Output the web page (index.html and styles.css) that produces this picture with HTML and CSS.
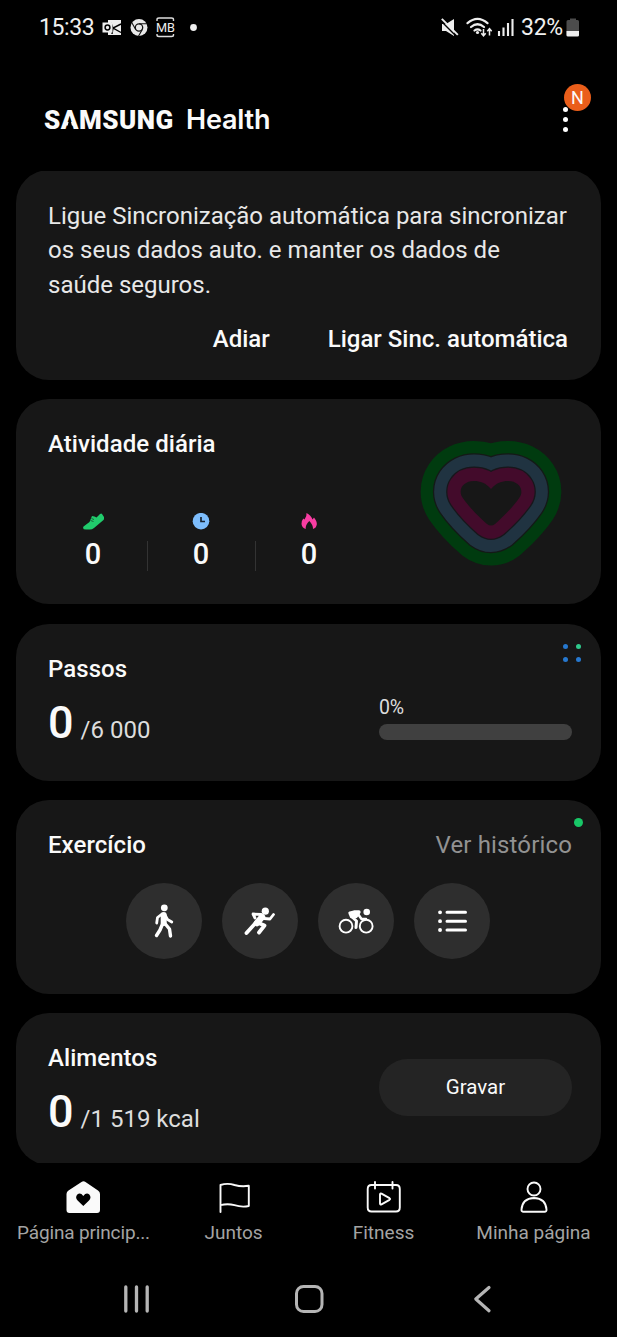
FILE: index.html
```html
<!DOCTYPE html>
<html lang="pt">
<head>
<meta charset="utf-8">
<title>Samsung Health</title>
<link rel="stylesheet" href="styles.css">
</head>
<body>
<div class="screen">
  <div class="status">
    <div class="status-left">
      <span class="clock">15:33</span>
      <svg class="s-icons" width="100" height="26" viewBox="100 14 100 26">
        <path fill="#eee" d="M108 20h13v15h-13z"/>
        <path fill="none" stroke="#000" stroke-width="1.400" d="M121 24l-8 4 8 4.500M113 28l-2-5M113 28l-1 6"/>
        <rect x="102.500" y="22.500" width="10" height="10" fill="#eee"/>
        <circle cx="107.500" cy="27.500" r="2.400" fill="none" stroke="#000" stroke-width="1.500"/>
        <circle cx="139" cy="27.500" r="8.500" fill="#e8e8e8"/>
        <circle cx="139" cy="27.500" r="3.700" fill="#e8e8e8" stroke="#111" stroke-width="1.300"/>
        <path d="M139 23.700h8M135.700 29.500l-4-7M142.300 29.500l-4 7" stroke="#111" stroke-width="1.100"/>
        <path d="M157 21v-1.500q0-1.500 2-1.500h12.500q2 0 2 1.500V21M157 34v1q0 1.500 2 1.500h12.500q2 0 2-1.500v-1" fill="none" stroke="#ddd" stroke-width="1.400"/>
        <text x="156" y="32" class="mb" textLength="19" lengthAdjust="spacingAndGlyphs">MB</text>
        <circle cx="193.500" cy="27.500" r="3.400" fill="#eee"/>
      </svg>
    </div>
    <div class="status-right">
      <svg width="76" height="26" viewBox="440 14 76 26">
        <path fill="#eee" d="M442 24h4l8-5v17l-8-5h-4z"/>
        <path d="M440.500 20.500l16 16" stroke="#000" stroke-width="1.500"/>
        <path d="M441.800 18.800l16 16" stroke="#eee" stroke-width="1.900"/>
        <g fill="none" stroke="#eee" stroke-width="2.200" stroke-linecap="round">
          <path d="M467.500 23.200q10-8.500 20 0M471 27q6.500-5.500 13 0M474.500 30.500q3-2.300 6 0"/>
        </g>
        <circle cx="477.500" cy="32.500" r="1.600" fill="#eee"/>
        <path d="M483.500 29v6.500M481.300 33.300l2.200 2.500 2.200-2.500M489.500 35.500V29M487.300 31.200l2.200-2.500 2.200 2.500" fill="none" stroke="#eee" stroke-width="1.500"/>
        <path d="M499 31v5M503.500 27.500v8.500M508 23v13M512.500 19v17" stroke="#eee" stroke-width="2.100"/>
      </svg>
      <span class="percent">32%</span>
      <svg width="14" height="20" viewBox="566 17 14 20">
        <path fill="#4c4c4c" d="M570 18.500h6V20h1.500q1.500 0 1.500 1.500V36h-12.500V21.500q0-1.500 1.500-1.500h2z"/>
        <path fill="#eee" d="M566.500 31H579v4q0 1.500-1.500 1.500H568q-1.500 0-1.500-1.500z"/>
      </svg>
    </div>
  </div>

  <header class="header">
    <div class="brand"><span class="samsung">S<span class="open-a">A</span>MSUNG</span><span class="health">Health</span></div>
    <div class="more">
      <i></i><i></i><i></i>
      <span class="badge">N</span>
    </div>
  </header>

  <main class="feed">
    <section class="card sync">
      <p class="sync-text">Ligue Sincronização automática para sincronizar<br>os seus dados auto. e manter os dados de<br>saúde seguros.</p>
      <div class="sync-actions"><span class="later">Adiar</span><span class="enable">Ligar Sinc. automática</span></div>
    </section>

    <section class="card activity">
      <div class="activity-info">
        <h2>Atividade diária</h2>
        <div class="stats">
          <div class="stat">
            <svg width="22" height="18" viewBox="82 513 22 18"><path fill="#20cb6c" d="M83.500 526.500l6-4.500 2.500-6 2.500.500 2 1 3.500-3.500q1.500-.8 2 0l2.200 3.200q.5 1.500-.700 2.800l-9.500 8q-2 1.500-4 1.500h-4q-4 0-2.500-3z"/><path d="M90.500 520.500l3 1M91.500 518.500l2.500 1" stroke="#171717" stroke-width=".6"/></svg>
            <b>0</b>
          </div>
          <div class="stat">
            <svg width="22" height="18" viewBox="190 513 22 18"><circle cx="201" cy="521.200" r="8.300" fill="#7dbdfc"/><path d="M201 517v4.500h4" fill="none" stroke="#172432" stroke-width="1.700"/></svg>
            <b>0</b>
          </div>
          <div class="stat">
            <svg width="22" height="18" viewBox="298 513 22 18"><path fill="#f83da2" d="M306.500 513q4.500 2 6 6.500l1.500-2q3.200 4 2.800 7-.5 3.500-3.800 4.500.2-4-3.700-8-4.100 4-3.600 8-3.700-1-4.200-5-.3-3 1.800-5.500l1.200 1q2.500-3 2-6.500z"/></svg>
            <b>0</b>
          </div>
        </div>
      </div>
      <svg class="heart" width="152" height="136" viewBox="415 436 152 136">
        <defs><path id="heart" stroke-linejoin="round" d="M491 489C486 483 480 481 474 481C463 481 457.500 490 462.500 497.500C469 507 479 517 487 524Q491 527 495 524C503 517 513 507 519.500 497.500C524.500 490 519 481 508 481C502 481 496 483 491 489Z"/></defs>
        <use href="#heart" stroke="#003b0f" stroke-width="80"/>
        <use href="#heart" stroke="#141917" stroke-width="55.500"/>
        <use href="#heart" stroke="#203341" stroke-width="53"/>
        <use href="#heart" stroke="#17171b" stroke-width="29"/>
        <use href="#heart" stroke="#430b2b" stroke-width="26.500"/>
        <use href="#heart" fill="#171717"/>
      </svg>
    </section>

    <section class="card steps">
      <div>
        <h2>Passos</h2>
        <p class="amount"><b>0</b><span>/6 000</span></p>
      </div>
      <div class="progress"><span>0%</span><div class="bar"></div></div>
      <div class="dots"><i></i><i class="green"></i><i></i><i></i></div>
    </section>

    <section class="card exercise">
      <div class="exercise-head"><h2>Exercício</h2><span>Ver histórico</span></div>
      <div class="shortcuts">
        <div class="round"><svg width="76" height="76" viewBox="126 883 76 76"><g fill="none" stroke="#fff" stroke-linecap="round" stroke-linejoin="round"><circle cx="164.300" cy="907.800" r="3.400" fill="#fff" stroke="none"/><path d="M163.700 915v8" stroke-width="6"/><path d="M162 914l-4.500 3.500-.8 5.500M165 915l2.500 4.500 4.300 2.500" stroke-width="2.800"/><path d="M162.500 924l-2.500 6-3.500 5.500M164.500 923l5 6 1 7" stroke-width="3.400"/></g></svg></div>
        <div class="round"><svg width="76" height="76" viewBox="222 883 76 76"><g fill="none" stroke="#fff" stroke-linecap="round" stroke-linejoin="round"><circle cx="265.300" cy="911.200" r="3.600" fill="#fff" stroke="none"/><path d="M262 917l-5 6" stroke-width="6.500"/><path d="M261 914.500l-8-.5 2 4M264 918.500l6 .5 3.500-4.500" stroke-width="2.800"/><path d="M256.500 922l-10 11M258.500 923l6 2.500-5.500 7" stroke-width="3.800"/></g></svg></div>
        <div class="round"><svg width="76" height="76" viewBox="318 883 76 76"><g fill="none" stroke="#fff" stroke-linecap="round" stroke-linejoin="round"><circle cx="346" cy="926.200" r="6.400" stroke-width="1.900"/><circle cx="366.200" cy="926.200" r="6.400" stroke-width="1.900"/><circle cx="366.700" cy="912" r="3.300" fill="#fff" stroke="none"/><path d="M350 913l4-1h5l-3 4.500h-4.500z" fill="#fff" stroke-width="3.300"/><path d="M351.500 916.500l5 4.500-.5 6.500" stroke-width="3"/><path d="M358 914l3.500 5h4.500" stroke-width="2.500"/></g></svg></div>
        <div class="round"><svg width="76" height="76" viewBox="414 883 76 76"><g stroke="#fff" stroke-linecap="round"><path d="M447 912.300h18.500M447 921.200h18.500M447 930h18.500" stroke-width="3"/><path d="M440 912.300h.1M440 921.200h.1M440 930h.1" stroke-width="3.800"/></g></svg></div>
      </div>
      <i class="new-dot"></i>
    </section>

    <section class="card food">
      <div>
        <h2>Alimentos</h2>
        <p class="amount"><b>0</b><span>/1 519 kcal</span></p>
      </div>
      <span class="record">Gravar</span>
    </section>
  </main>

  <nav class="tabs">
    <div class="tab home">
      <svg width="36" height="36" viewBox="65.500 1180 36 36"><path fill="#fafafa" d="M81 1182q2-1.300 4 0l12.500 8.500q2 1.300 2 3.500v16q0 3-3 3H69q-3 0-3-3v-16q0-2.200 2-3.500z"/><path fill="#000" d="M82.800 1196q3-4 6-1.500 2.500 3-.3 6l-5.700 5.500-5.700-5.500q-2.800-3-.3-6 3-2.500 6 1.500z"/></svg>
      <span>Página princip...</span>
    </div>
    <div class="tab flag">
      <svg width="36" height="36" viewBox="215.500 1180 36 36"><path fill="none" stroke="#fafafa" stroke-width="1.900" stroke-linejoin="round" stroke-linecap="round" d="M220 1212v-27q7-2.300 14 0 7 2 14.300.8V1206q-7 1.500-14.300-.8-7-2-14 0"/></svg>
      <span>Juntos</span>
    </div>
    <div class="tab fitness">
      <svg width="36" height="36" viewBox="365.500 1180 36 36"><g fill="none" stroke="#fafafa" stroke-width="1.900" stroke-linecap="round" stroke-linejoin="round"><path d="M371 1185h24.500q3.800 0 3.800 4v18.500q0 4-3.800 4H371q-3.800 0-3.800-4V1189q0-4 3.800-4zM374.500 1182v6.500M392 1182v6.500"/><path d="M379.500 1194.500v9q0 1.500 1.500.8l8-4.500q1.200-.8 0-1.600l-8-4.500q-1.500-.7-1.500.8z"/></g></svg>
      <span>Fitness</span>
    </div>
    <div class="tab me">
      <svg width="36" height="36" viewBox="515.500 1180 36 36"><g fill="none" stroke="#fafafa" stroke-width="1.900"><circle cx="533.500" cy="1189" r="6.500"/><path d="M521 1209.500q.8-11 12.500-11.500 11.700.5 12.500 11.500.2 2.300-2 2.300h-21q-2.200 0-2-2.300z"/></g></svg>
      <span>Minha página</span>
    </div>
  </nav>

  <div class="system-nav">
    <svg width="34" height="34" viewBox="0 0 34 34"><path d="M6.800 5v24M17.500 5v24M28.200 5v24" stroke="#b5b5b5" stroke-width="3.300" stroke-linecap="round"/></svg>
    <svg width="34" height="34" viewBox="0 0 34 34"><rect x="4.500" y="4.500" width="25.500" height="25" rx="7" fill="none" stroke="#b5b5b5" stroke-width="3"/></svg>
    <svg width="34" height="34" viewBox="0 0 34 34"><path d="M24 5.500L10.800 17 24 28.800" fill="none" stroke="#b5b5b5" stroke-width="3.200" stroke-linecap="round" stroke-linejoin="round"/></svg>
  </div>
</div>
</body>
</html>
```

FILE: styles.css
```css
* { box-sizing: border-box; }
body { margin: 0; background: #000; color: #fafafa; font-family: Roboto, sans-serif; }
h2, p { margin: 0; }
svg { display: block; flex: none; }
.screen { width: 617px; height: 1337px; display: flex; flex-direction: column; overflow: hidden; background: #000; }

.status { height: 54px; flex: none; display: flex; justify-content: space-between; padding: 14px 37px 0 39px; }
.status-left, .status-right { display: flex; height: 26px; align-items: center; color: #f0f0f0; }
.clock { width: 61px; font-size: 23px; line-height: 26px; padding-top: 1px; letter-spacing: -.4px; }
.mb { font: 13.500px Roboto, sans-serif; fill: #eee; }
.percent { width: 50px; font-size: 23px; line-height: 26px; padding: 1px 0 0 5px; letter-spacing: -.3px; }

.header { height: 117px; flex: none; display: flex; justify-content: space-between; padding: 49px 46px 0 44px; }
.brand { display: flex; align-items: center; height: 34px; line-height: 32px; white-space: nowrap; }
.samsung { width: 142px; font-size: 26px; font-weight: 900; letter-spacing: .5px; }
.open-a { position: relative; }
.open-a::after { content: ""; position: absolute; left: 5.500px; bottom: 4px; width: 7px; height: 14px; background: #000; clip-path: polygon(50% 0, 100% 100%, 0 100%); }
.health { font: 600 27px/32px Inter, sans-serif; letter-spacing: -.2px; }
.more { position: relative; width: 8px; height: 32px; display: flex; flex-direction: column; gap: 5px; padding-top: 4px; }
.more i { width: 5px; height: 5px; border-radius: 50%; background: #fff; }
.badge { position: absolute; left: 1px; top: -19px; width: 27px; height: 27px; border-radius: 50%; background: #ea5e1a; font-size: 18px; line-height: 28px; text-align: center; }

.feed { height: 992px; flex: none; display: flex; flex-direction: column; gap: 19px; padding: 0 16px; overflow: hidden; }
.card { position: relative; flex: none; border-radius: 33px; background: #171717; padding-left: 32px; padding-right: 29px; }
h2 { font-size: 24px; font-weight: 500; line-height: 28px; letter-spacing: .05px; }

.sync { height: 210px; margin-top: -1px; padding-top: 29px; }
.sync-text { font-size: 24px; line-height: 34.300px; white-space: nowrap; color: #e8e8e8; }
.sync-actions { display: flex; justify-content: flex-end; gap: 58px; margin-top: 23px; padding-right: 4px; font-size: 24px; font-weight: 500; line-height: 28px; }

.activity { height: 205px; padding-top: 31px; display: flex; justify-content: space-between; padding-right: 34px; }
.stats { display: grid; grid-template-columns: repeat(3, 108px); margin: 55px 0 0 -9px; }
.stat { display: flex; flex-direction: column; align-items: center; gap: 6px; position: relative; }
.stat b { font-size: 29px; font-weight: 500; line-height: 34px; }
.stat + .stat::before { content: ""; position: absolute; left: 0; top: 28px; width: 1px; height: 30px; background: #333; }
.heart { margin-top: 6px; }

.steps { height: 157px; margin-top: .5px; display: flex; justify-content: space-between; padding-top: 31px; }
.amount { display: flex; align-items: baseline; gap: 7px; margin-top: 15px; line-height: 50px; }
.amount b { font-size: 45px; font-weight: 500; }
.amount span { font-size: 24px; color: #ddd; }
.progress { width: 193px; padding-top: 41px; }
.progress span { display: block; font-size: 19.500px; line-height: 24px; letter-spacing: -.3px; color: #ddd; }
.bar { margin-top: 4px; height: 16px; border-radius: 8px; background: #404040; }
.dots { position: absolute; right: 20px; top: 20px; display: grid; grid-template-columns: 5px 5px; gap: 8px; }
.dots i { width: 5px; height: 5px; border-radius: 50%; background: #2678cf; }
.dots .green { background: #2fc98c; }

.exercise { height: 193.500px; margin-top: .5px; padding-top: 31px; }
.exercise-head { display: flex; justify-content: space-between; line-height: 28px; }
.exercise-head span { font-size: 24px; letter-spacing: .15px; color: #929292; }
.shortcuts { display: flex; justify-content: center; gap: 20px; margin-top: 24px; padding-right: 4px; }
.round { width: 76px; height: 76px; border-radius: 50%; background: #2e2e2e; }
.new-dot { position: absolute; right: 18px; top: 18px; width: 9px; height: 9px; border-radius: 50%; background: #18c767; }

.food { height: 152px; padding-top: 31px; display: flex; justify-content: space-between; }
.record { width: 193px; height: 57px; margin-top: 15px; border-radius: 29px; background: #242424; font-size: 20.500px; line-height: 57px; text-align: center; }

.tabs { height: 97px; flex: none; display: grid; grid-template-columns: repeat(4, 150px); padding: 17px 8px 0 8.500px; }
.tab { display: flex; flex-direction: column; align-items: center; gap: 5px; font-size: 19px; line-height: 24px; color: #a4a4a4; white-space: nowrap; }
.home span { letter-spacing: -.15px; }
.system-nav { flex: 1; display: grid; grid-template-columns: repeat(3, 173px); justify-items: center; padding: 22px 0 0 49px; }
```
